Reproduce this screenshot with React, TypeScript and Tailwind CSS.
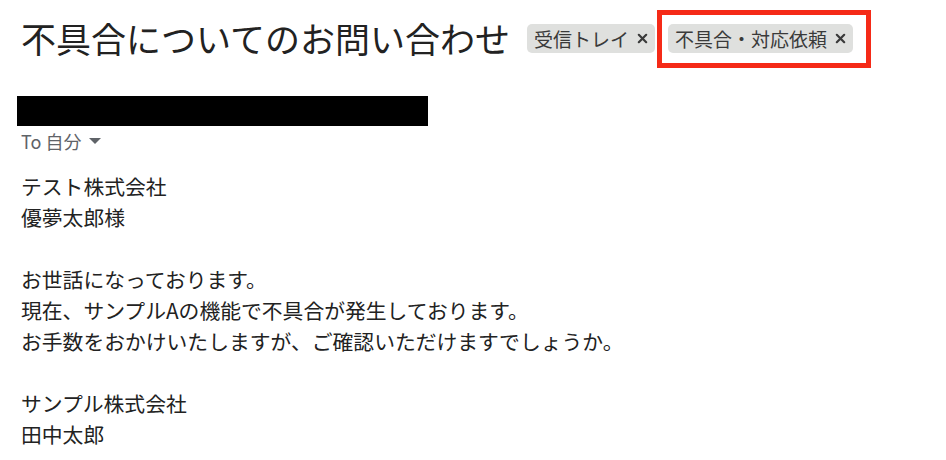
import { ReactNode } from "react";

function XIcon() {
    return (
        <svg width="11" height="11" viewBox="0 0 11 11" className="shrink-0">
            <path d="M1.8 1.8L9.2 9.2M9.2 1.8L1.8 9.2" stroke="#3a3a3a" strokeWidth="2.2" strokeLinecap="round" />
        </svg>
    );
}

function Label({ children }: { children: ReactNode }) {
    return (
        <span className="flex items-center h-[29px] pl-[7px] pr-[7px] gap-[8px] rounded-[5px] bg-[#dfe0de] text-[19px] leading-[29px] text-[#3a3a3a]">
            <span>{children}</span>
            <XIcon />
        </span>
    );
}

const body = [
    "テスト株式会社",
    "優夢太郎様",
    "",
    "お世話になっております。",
    "現在、サンプルAの機能で不具合が発生しております。",
    "お手数をおかけいたしますが、ご確認いただけますでしょうか。",
    "",
    "サンプル株式会社",
    "田中太郎",
];

export default function App() {
    return (
        <div className="w-[946px] h-[460px] overflow-hidden bg-white pl-[21px] font-['Noto_Sans_CJK_JP','Noto_Sans_CJK_SC',sans-serif] text-[#222]">
            <div className="flex items-center h-[48px] mt-[14px]">
                <h1 className="text-[35px] leading-[48px] font-normal text-[#222] whitespace-nowrap">
                    不具合についてのお問い合わせ
                </h1>
                <div className="flex items-center gap-[13px] ml-[17px]">
                    <Label>受信トレイ</Label>
                    <div className="relative">
                        <Label>不具合・対応依頼</Label>
                        {/* annotation box */}
                        <div className="absolute -left-[11px] -right-[18px] -top-[14px] -bottom-[15px] border-[5px] border-[#f52a17] pointer-events-none" />
                    </div>
                </div>
            </div>

            <div className="w-[411px] h-[30px] bg-black mt-[34px] -ml-[4px]" />

            <div className="flex items-center gap-[8px] mt-[5px] h-[20px] text-[18px] leading-[20px] text-[#5f6368]">
                <span>To 自分</span>
                <svg width="12" height="6" viewBox="0 0 12 6">
                    <path d="M0 0H12L6 6Z" fill="#5f6368" />
                </svg>
            </div>

            <div className="mt-[20px] text-[20.8px] leading-[31px] text-[#222]">
                {body.map((line, i) => (
                    <div key={i} className="h-[31px] whitespace-nowrap">
                        {line}
                    </div>
                ))}
            </div>
        </div>
    );
}
